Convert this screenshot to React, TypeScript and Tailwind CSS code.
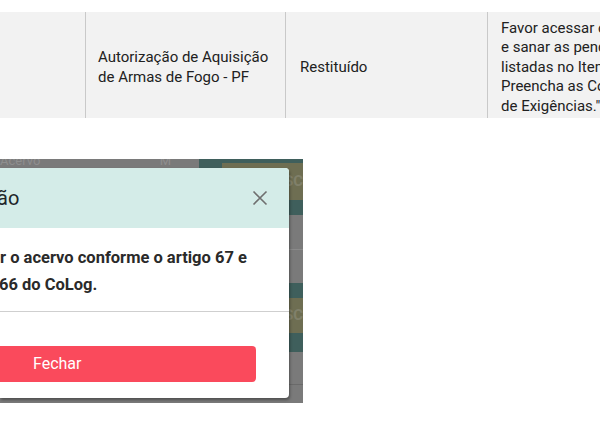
import React from "react";

function CloseIcon() {
  return (
    <svg width="16" height="16" viewBox="0 0 16 16" fill="none">
      <path d="M1.5 1.5L14.5 14.5M14.5 1.5L1.5 14.5" stroke="#6f6f6f" strokeWidth="1.6" />
    </svg>
  );
}

function TableRow() {
  return (
    <div className="mt-[12px] flex h-[106px] bg-[#f2f2f2] text-[15px] leading-[19.5px] text-[#212121]">
      <div className="w-[86px] border-r border-[#c9c9c9]"></div>
      <div className="flex w-[200px] items-center border-r border-[#c9c9c9] pl-[12px] pt-[5px]">
        <p>
          Autorização de Aquisição
          <br />
          de Armas de Fogo - PF
        </p>
      </div>
      <div className="flex w-[202px] items-center border-r border-[#c9c9c9] pl-[14px] pt-[5px]">
        <p>Restituído</p>
      </div>
      <div className="flex flex-1 items-center overflow-hidden whitespace-nowrap pl-[13px] pt-[5px]">
        <div>
          <p>Favor acessar o sistema</p>
          <p>e sanar as pendências</p>
          <p>listadas no Item "</p>
          <p>Preencha as Condições</p>
          <p>de Exigências."</p>
        </div>
      </div>
    </div>
  );
}

function Backdrop() {
  return (
    <div className="flex h-full">
      <div className="w-[199px] overflow-hidden whitespace-nowrap">
        <div className="flex justify-between pr-[28px] text-[13px] leading-[16px] text-[#8e8e8e]">
          <span className="-mt-[6px]">Acervo</span>
          <span className="-mt-[6px]">M</span>
        </div>
      </div>
      <div className="flex flex-1 flex-col">
        <div className="h-[56px] bg-[#3f5f5c] pl-[23px] pt-[4px]">
          <div className="flex h-[37px] items-center justify-end bg-[#6e6e52] text-[15px] font-bold text-[#80806a]">
            SC
          </div>
        </div>
        <div className="h-[35px] border-b border-[#8a8a8a]"></div>
        <div className="h-[33px]"></div>
        <div className="h-[69px] bg-[#3f5f5c] pl-[23px] pt-[15px]">
          <div className="flex h-[35px] items-center justify-end bg-[#6e6e52] text-[15px] font-bold text-[#80806a]">
            SC
          </div>
        </div>
        <div className="h-[33px] border-b border-[#6a6a6a]"></div>
      </div>
    </div>
  );
}

function Modal() {
  return (
    <div className="absolute left-0 top-[9px] flex h-[230px] w-[289px] flex-col overflow-hidden rounded-r-[4px] bg-white shadow-[1px_2px_3px_rgba(0,0,0,0.35)]">
      <div className="flex h-[60px] items-center justify-between bg-[#d4ece8] pr-[21px]">
        <span className="-ml-[3px] text-[20px] leading-[24px] text-[#212529]">ão</span>
        <CloseIcon />
      </div>
      <div className="h-[84px] whitespace-nowrap border-b border-[#cfcfcf] pt-[16px] text-[16.5px] font-bold leading-[27px] text-[#2a2a2a]">
        <p>r o acervo conforme o artigo 67 e</p>
        <p className="-ml-[1px]">66 do CoLog.</p>
      </div>
      <div className="pt-[34px]">
        <button className="h-[36px] w-[256px] rounded-r-[4px] bg-[#fa4a5c] pl-[33px] text-left text-[16px] text-white">
          Fechar
        </button>
      </div>
    </div>
  );
}

export default function App() {
  return (
    <div className="h-[425px] w-[600px] overflow-hidden bg-white font-['Roboto',sans-serif]">
      <TableRow />
      <div className="relative mt-[41px] h-[244px] w-[303px] overflow-hidden bg-[#7a7a7a]">
        <Backdrop />
        <Modal />
      </div>
    </div>
  );
}
